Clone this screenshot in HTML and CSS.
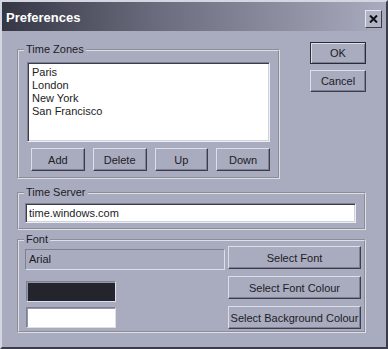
FILE: index.html
```html
<!DOCTYPE html>
<html lang="en">
<head>
    <meta charset="UTF-8" />
    <meta name="viewport" content="width=device-width, initial-scale=1.0" />
    <title>Preferences</title>
    <link rel="stylesheet" href="styles.css">
</head>
<body>
    <div class="window">
        <header class="titlebar">
            <h1>Preferences</h1>
            <button class="close" title="Close">
                <svg width="9" height="8" viewBox="0 0 9 8">
                    <path d="M1 0.5 L8 7.5 M8 0.5 L1 7.5" stroke="#101018" stroke-width="2" fill="none" />
                </svg>
            </button>
        </header>
        <main class="content">
            <div class="top-row">
                <fieldset class="group zones">
                    <legend>Time Zones</legend>
                    <div class="group-body">
                        <ul class="zone-list">
                            <li>Paris</li>
                            <li>London</li>
                            <li>New York</li>
                            <li>San Francisco</li>
                        </ul>
                        <div class="zone-buttons">
                            <button class="btn">Add</button>
                            <button class="btn">Delete</button>
                            <button class="btn">Up</button>
                            <button class="btn">Down</button>
                        </div>
                    </div>
                </fieldset>
                <div class="dialog-buttons">
                    <button class="btn default">OK</button>
                    <button class="btn">Cancel</button>
                </div>
            </div>

            <fieldset class="group server">
                <legend>Time Server</legend>
                <div class="group-body">
                    <input type="text" class="field" value="time.windows.com" />
                </div>
            </fieldset>

            <fieldset class="group font">
                <legend>Font</legend>
                <div class="group-body font-grid">
                    <div class="font-name">Arial</div>
                    <button class="btn">Select Font</button>
                    <div class="swatch dark"></div>
                    <button class="btn">Select Font Colour</button>
                    <div class="swatch light"></div>
                    <button class="btn">Select Background Colour</button>
                </div>
            </fieldset>
        </main>
    </div>
</body>
</html>
```

FILE: styles.css
```css
body,
h1,
ul,
li,
fieldset,
legend {
  margin: 0;
  padding: 0;
}

* {
  box-sizing: border-box;
}

body {
  font-family: 'Liberation Sans', Arial, sans-serif;
  font-size: 11px;
  color: #1c1c26;
  background-color: #a9abbe;
}

.window {
  width: 388px;
  height: 349px;
  background-color: #a9abbe;
  border: 2px solid;
  border-color: #d4d6e2 #3c3d4c #3c3d4c #d4d6e2;
  display: flex;
  flex-direction: column;
}

/* barra de titulo */
.titlebar {
  height: 29px;
  padding: 8px 4px 0 4px;
  display: flex;
  justify-content: space-between;
  align-items: flex-start;
  background: linear-gradient(to right, #363745, #6a6b7c 40%, #a9abbe);
}

.titlebar h1 {
  font-size: 13px;
  font-weight: bold;
  color: #fff;
  line-height: 15px;
}

.close {
  width: 17px;
  height: 18px;
  padding: 0;
  background-color: #b2b4c6;
  border: 1px solid;
  border-color: #e4e6f0 #3c3d4c #3c3d4c #e4e6f0;
  display: flex;
  align-items: center;
  justify-content: center;
}

.content {
  padding: 11px 20px 0 15px;
  display: flex;
  flex-direction: column;
}

.top-row {
  display: flex;
  justify-content: space-between;
  align-items: flex-start;
}

/* grupos */
.group {
  border: 2px groove #dcdee9;
  min-width: 0;
}

.group legend {
  margin-left: 5px;
  padding: 0 2px;
  line-height: 13px;
}

.zones {
  width: 263px;
  margin-top: 1px;
}

.zones .group-body {
  padding: 6px 8px 6px 8px;
}

.zone-list {
  list-style: none;
  height: 80px;
  background-color: #fff;
  padding: 3px 4px;
  border: 1px solid;
  border-color: #7e8092 #eceef6 #eceef6 #7e8092;
  box-shadow: inset 1px 1px #3c3d4c, inset -1px -1px #cfd1dd;
}

.zone-list li {
  line-height: 13px;
}

.zone-buttons {
  display: flex;
  gap: 8px;
  margin: 6px 0 0 4px;
}

.zone-buttons .btn {
  flex: 1;
}

.btn {
  height: 23px;
  padding: 0;
  font-family: inherit;
  font-size: 11px;
  color: #1c1c26;
  background-color: #a9abbe;
  border: 1px solid;
  border-color: #dcdee9 #3c3d4c #3c3d4c #dcdee9;
  box-shadow: inset -1px -1px #7e8092;
}

.dialog-buttons {
  width: 56px;
  display: flex;
  flex-direction: column;
  gap: 6px;
}

.dialog-buttons .btn {
  height: 22px;
}

.btn.default {
  border-color: #2a2b36;
  box-shadow: inset 1px 1px #dcdee9, inset -1px -1px #7e8092;
}

.server {
  margin-top: 7px;
}

.server .group-body {
  padding: 4px 8px 5px 6px;
}

.field {
  display: block;
  width: 100%;
  height: 20px;
  padding: 0 3px;
  font-family: inherit;
  font-size: 11px;
  color: #1c1c26;
  background-color: #fff;
  border: 1px solid;
  border-color: #7e8092 #eceef6 #eceef6 #7e8092;
  box-shadow: inset 1px 1px #3c3d4c, inset -1px -1px #cfd1dd;
  outline: none;
}

.font {
  margin-top: 3px;
}

.font-grid {
  padding: 0 3px 2px 6px;
  display: grid;
  grid-template-columns: 200px 1fr;
  grid-template-rows: 23px 23px 23px;
  column-gap: 3px;
  row-gap: 7px;
}

.font-name {
  margin-top: 3px;
  height: 21px;
  padding: 3px 0 0 3px;
  border: 1px solid;
  border-color: #7e8092 #dcdee9 #dcdee9 #7e8092;
}

.swatch {
  width: 90px;
  height: 21px;
  margin-left: 1px;
  border: 1px solid;
  border-color: #7e8092 #dcdee9 #dcdee9 #7e8092;
  box-shadow: inset 1px 1px #9597a8;
}

.swatch.dark {
  margin-top: 5px;
  background-color: #23242c;
}

.swatch.light {
  margin-top: 1px;
  background-color: #fff;
}
```
